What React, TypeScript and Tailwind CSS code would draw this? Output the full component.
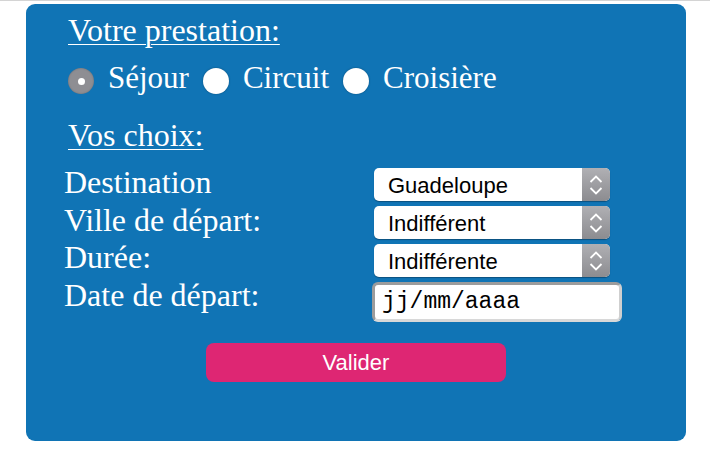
import React, { useState } from 'react';

const serif = { fontFamily: '"Liberation Serif", "Times New Roman", serif' };
const sans = { fontFamily: '"Liberation Sans", Arial, sans-serif' };
const mono = { fontFamily: '"Liberation Mono", "Courier New", monospace' };

const Radio = ({ checked, onClick }: { checked: boolean; onClick: () => void }) => (
  <span
    onClick={onClick}
    className={
      'mt-[6px] flex h-[26px] w-[26px] shrink-0 cursor-pointer items-center justify-center rounded-full ' +
      (checked ? 'bg-[#8e8e93] shadow-[inset_0_0_2px_rgba(0,0,0,0.25)]' : 'bg-white shadow-[0_0_2px_rgba(0,0,0,0.35)]')
    }
  >
    {checked && <span className="h-[7px] w-[7px] rounded-full bg-white" />}
  </span>
);

const FakeSelect = ({ value }: { value: string }) => (
  <div className="flex h-[33px] w-[236px] overflow-hidden rounded-[5px] bg-white shadow-[0_1px_1px_rgba(0,0,0,0.3)]">
    <div className="flex flex-1 items-center pl-[14px] pt-[2px] text-[22px] leading-none text-black" style={sans}>
      {value}
    </div>
    <div className="flex w-[28px] items-center justify-center bg-gradient-to-b from-[#b0b0b4] to-[#8c8c90]">
      <svg width="16" height="24" viewBox="0 0 16 24" fill="none" stroke="white" strokeWidth="1.8">
        <path d="M2.5 9 L8 3.5 L13.5 9" />
        <path d="M2.5 15 L8 20.5 L13.5 15" />
      </svg>
    </div>
  </div>
);

const labels = ['Destination', 'Ville de départ:', 'Durée:', 'Date de départ:'];

export default function App() {
  const [prestation, setPrestation] = useState('sejour');
  const options = [
    { id: 'sejour', label: 'Séjour' },
    { id: 'circuit', label: 'Circuit' },
    { id: 'croisiere', label: 'Croisière' },
  ];

  return (
    <div className="min-h-[462px] w-[710px] bg-white">
      <div className="h-px w-full bg-[#d4d4d4]" />
      <div className="ml-[26px] mt-[3px] h-[437px] w-[660px] rounded-[9px] bg-[#1074b5] pt-[8px] text-white" style={serif}>
        <div className="pl-[42px] text-[32px] leading-[36.8px]">
          <div className="underline decoration-1 underline-offset-[3px]">Votre prestation:</div>
          <div className="mt-[11px] flex items-center text-[31px]">
            {options.map((o, i) => (
              <React.Fragment key={o.id}>
                <span className={i > 0 ? 'ml-[14px] flex' : 'flex'}>
                  <Radio checked={prestation === o.id} onClick={() => setPrestation(o.id)} />
                </span>
                <span className="ml-[14px]">{o.label}</span>
              </React.Fragment>
            ))}
          </div>
          <div className="mt-[20px] underline decoration-1 underline-offset-[3px]">Vos choix:</div>
        </div>

        <div className="mt-[11px] flex">
          <div className="w-[348px] pl-[38px] text-[32px] leading-[37.5px]">
            {labels.map((l) => (
              <div key={l}>{l}</div>
            ))}
          </div>
          <div className="flex flex-col gap-[5px] pt-[4px]">
            <FakeSelect value="Guadeloupe" />
            <FakeSelect value="Indifférent" />
            <FakeSelect value="Indifférente" />
            <div className="-ml-[2px] flex h-[40px] w-[250px] items-center rounded-[6px] border-[3px] border-[#9c9c9c] border-b-[#d8d8d8] border-r-[#cfcfcf] bg-white pl-[7px] text-[23px] leading-none text-black" style={mono}>
              jj/mm/aaaa
            </div>
          </div>
        </div>

        <div className="mt-[21px] flex justify-center">
          <button className="h-[39px] w-[300px] rounded-[8px] bg-[#de2673] text-[22px] leading-none text-white" style={sans}>
            Valider
          </button>
        </div>
      </div>
    </div>
  );
}
